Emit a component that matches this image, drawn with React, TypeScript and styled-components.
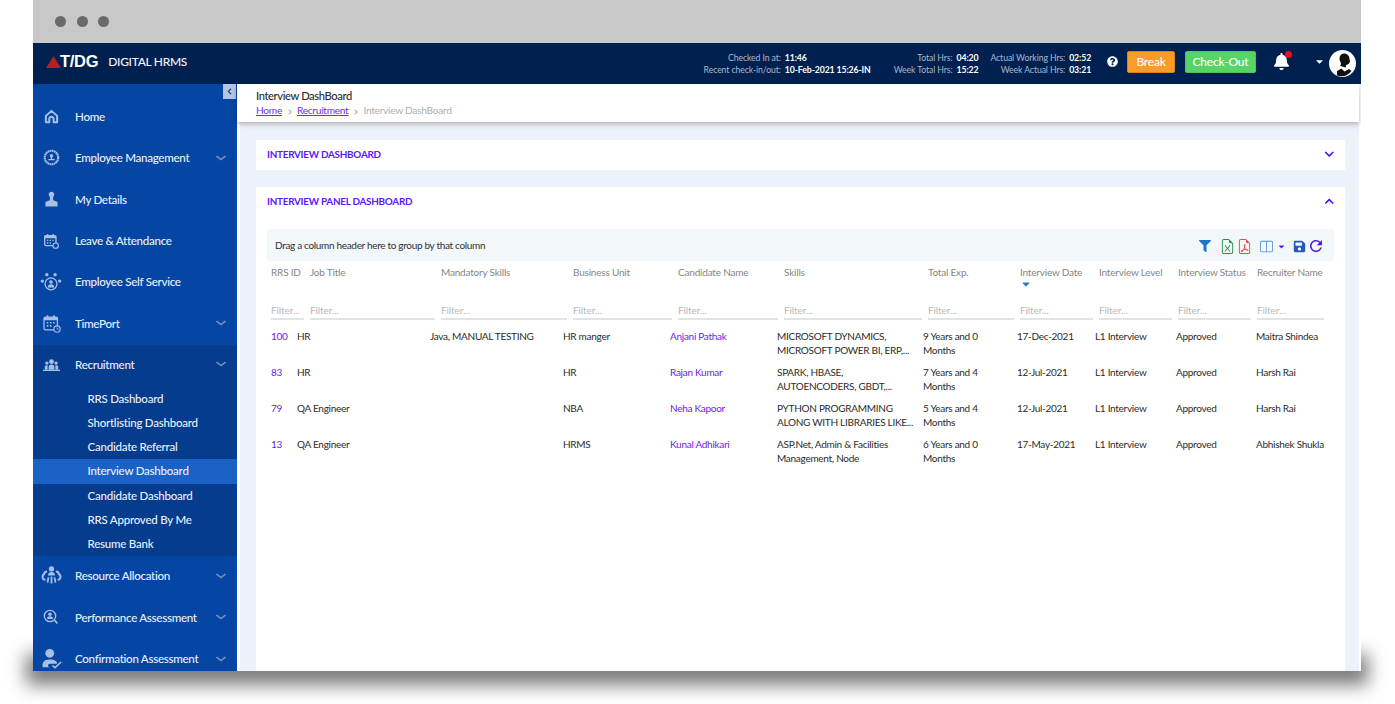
import React from "react";
import styled, { createGlobalStyle } from "styled-components";
import { FaBell, FaChevronDown, FaChevronUp, FaChevronLeft, FaChevronRight, FaFilter, FaQuestionCircle, FaSave, FaCaretDown } from "react-icons/fa";
import { BsFileEarmarkExcel, BsFileEarmarkPdf, BsLayoutSplit } from "react-icons/bs";
import { MdRefresh } from "react-icons/md";

const Global = createGlobalStyle`
  html, body { margin: 0; padding: 0; background: #fff; overflow: hidden; height: 704px; }
  * { box-sizing: border-box; }
  body { font-family: Lato, "Open Sans", sans-serif; }
`;

const Frame = styled.div`
  position: relative; isolation: isolate;
  margin-left: 33px; width: 1328px; height: 671px;
  &::before {
    content: ""; position: absolute; z-index: -1;
    left: -7px; right: -7px; top: 654px; height: 31px;
    background: rgba(0,0,0,.52); filter: blur(9px);
  }
`;
const Shell = styled.div`
  height: 671px; overflow: hidden; background: #fff;
  display: flex; flex-direction: column;
`;
const TitleBar = styled.div`
  height: 43px; flex: none; background: #c8c8c8;
  display: flex; align-items: center; gap: 10.5px; padding: 0 0 0 22px;
`;
const Dot = styled.span`width: 11px; height: 11px; border-radius: 50%; background: #6a6a6a;`;
const Header = styled.header`
  height: 41px; flex: none; background: #00214f; color: #fff;
  display: flex; align-items: center; padding: 0 5px 4px 13px;
`;
const Logo = styled.div`display: flex; align-items: center; gap: 0; width: 658px;`;
const LogoMark = styled.span`
  font: 900 16.5px/1 "Liberation Sans", sans-serif; letter-spacing: -.3px; color: #fff; margin-left: -1px;
`;
const Product = styled.span`font-size: 12px; font-weight: 500; margin-left: 10px; color: #f2f5fa; letter-spacing: -.3px;`;
const Stats = styled.div`
  display: grid; grid-template-columns: max-content max-content; column-gap: 4px;
  font-size: 8.7px; line-height: 12px; margin: 5px var(--gap) 0 0; letter-spacing: -.1px;
`;
const Label = styled.span`text-align: right; color: #aab7cb;`;
const Value = styled.span`color: #fff; font-weight: 700;`;
const Help = styled(FaQuestionCircle)`color: #fff; font-size: 11px; margin-left: 16px;`;
const HeadBtn = styled.button<{ $c: string; $w: number; $b: string; $l: number }>`
  height: 22px; width: ${p => p.$w}px; background: ${p => p.$c}; border: 1px solid ${p => p.$b}; border-radius: 2px;
  color: #fff; font: 500 12px Lato, sans-serif; letter-spacing: -.2px; padding: 0; margin-left: ${p => p.$l}px;
`;
const BellWrap = styled.div`position: relative; display: flex; margin-left: 17px; color: #fff; font-size: 17px;`;
const BellDot = styled.span`position: absolute; right: -2px; top: -2px; width: 7px; height: 7px; border-radius: 50%; background: #e8121f;`;
const Caret = styled(FaCaretDown)`color: #fff; font-size: 11px; margin-left: 24px;`;
const Avatar = styled.svg`width: 27px; height: 27px; margin: 4px 0 0 4px; flex: none;`;

const Body = styled.div`flex: 1; display: flex; min-height: 0;`;
const Sidebar = styled.nav`
  position: relative; width: 204px; flex: none; background: #0546a5; padding-top: 13px; overflow: hidden;
`;
const Collapse = styled.button`
  position: absolute; top: 0; right: 1px; width: 13px; height: 15px; background: #b4c6e3; border: 0; padding: 0;
  display: flex; align-items: center; justify-content: center; color: #1d3f78; font-size: 7px;
`;
const NavRow = styled.div<{ $open?: boolean }>`
  height: 41.3px; padding-bottom: 2px; display: flex; align-items: center; color: #e9eff9; font-size: 11.6px; font-weight: 500;
  letter-spacing: -.3px; background: ${p => (p.$open ? "#053c8e" : "transparent")};
`;
const NavIcon = styled.span`width: 36px; margin-right: 6px; flex: none; display: flex; justify-content: center; color: #a9c0e6;`;
const NavText = styled.span`flex: 1;`;
const NavChevron = styled(FaChevronDown)`color: #6f8cbc; font-size: 12px; margin-right: 10px; transform: scaleY(.75);`;
const SubList = styled.div`background: #053c8e; display: flex; flex-direction: column; padding-top: .5px;`;
const SubItem = styled.div<{ $active?: boolean }>`
  height: 24.25px; line-height: 24.25px; padding-left: 54.5px; font-size: 11.5px; color: #e9eff9; font-weight: 500;
  letter-spacing: -.23px; background: ${p => (p.$active ? "#1a62c6" : "transparent")};
`;

const Main = styled.main`flex: 1; margin: 0 2px 0 3px; background: #edf1f9; min-width: 0; display: flex; flex-direction: column;`;
const CrumbBar = styled.div`
  height: 38px; flex: none; background: #fff; padding: 5px 0 0 19px; margin-left: -3px;
  box-shadow: 0 2px 5px rgba(0,0,0,.28); position: relative;
`;
const PageTitle = styled.div`font-size: 11.2px; font-weight: 500; color: #2c2c2c; line-height: 14px; letter-spacing: -.4px;`;
const Crumbs = styled.div`display: flex; align-items: center; font-size: 10.2px; line-height: 14px; color: #b0b0b0; letter-spacing: -.3px;`;
const Crumb = styled.a`color: #6d2bff; text-decoration: underline;`;
const Sep = styled(FaChevronRight)`margin: 3px 4px 0 5px; color: #a6a6a6; font-size: 6px;`;
const Cards = styled.div`flex: 1; padding: 18px 14px 0 16px; display: flex; flex-direction: column; gap: 17px; min-height: 0;`;
const Card = styled.section<{ $grow?: boolean }>`
  background: #fff; ${p => (p.$grow ? "flex: 1;" : "height: 30px;")} padding: 0 11px;
`;
const CardHead = styled.div`
  height: 30px; padding-bottom: 2px; display: flex; align-items: center; justify-content: space-between;
  color: #5a17ff; font-size: 9.9px; font-weight: 700; letter-spacing: -.25px;
`;
const Chevron = styled.span`color: #4a12ee; font-size: 10.5px; display: flex; margin-right: 0;`;
const Toolbar = styled.div`
  margin-top: 12px; height: 32px; background: #f2f7fa; border-radius: 4px; display: flex; align-items: center;
  justify-content: space-between; padding: 0 9px 0 8px; font-size: 10px; color: #2f2f2f; letter-spacing: -.32px;
`;
const Tools = styled.div`display: flex; align-items: center; position: relative; top: 1px;`;
const ToolIcon = styled.span<{ $c: string; $s: number; $l: number }>`
  display: flex; color: ${p => p.$c}; font-size: ${p => p.$s}px; margin-left: ${p => p.$l}px;
`;
const HeadGrid = styled.div`
  display: grid; grid-template-columns: 39px 131px 132px 105px 106px 144px 92px 79px 79px 79px 73px;
  margin-left: 4px;
`;
const HeadCell = styled.div`
  height: 41px; padding-top: 5px; color: #868686; font-size: 10px; line-height: 13px; letter-spacing: -.2px; position: relative; white-space: nowrap;
`;
const SortMark = styled(FaCaretDown)`position: absolute; left: 0; top: 17px; color: #2f79c9; font-size: 12px;`;
const FilterCell = styled.div`
  height: 18px; margin-right: 6.5px; border-bottom: 2px solid #e2e3e4; color: #b9b9b9; font-size: 10px; line-height: 16px; letter-spacing: -.1px;
`;
const Rows = styled.div`margin-top: 9px; margin-left: 4px;`;
const Row = styled.div`
  display: grid; grid-template-columns: 26px 133px 133px 107px 107px 146px 94px 78px 81px 80px 74px;
  height: 36px; font-size: 10px; line-height: 14px; color: #2b2b2b; white-space: pre-line; letter-spacing: -.28px;
`;
const Link = styled.span`color: #6a22f2;`;

const Svg = ({ w, h = w, children }: { w: number; h?: number; children: React.ReactNode }) => (
  <svg width={w} height={h} viewBox="0 0 24 24" fill="currentColor">{children}</svg>
);
const Stroke = { fill: "none", stroke: "currentColor", strokeWidth: 2 };

const icons: Record<string, React.ReactNode> = {
  home: <Svg w={15}><path {...Stroke} strokeWidth={3.2} strokeLinejoin="round" d="M3 11 12 3l9 8v10h-5.500v-5a3.500 3.500 0 0 0-7 0v5H3z" /></Svg>,
  emp: <Svg w={17}><circle cx="12" cy="12" r="9.500" {...Stroke} strokeWidth={3} strokeDasharray="2.400 .6" /><circle cx="12" cy="9.500" r="2.400" /><path d="M11 11h2v3h3.500v2h-9v-2H11z" /></Svg>,
  details: <Svg w={17}><path d="M12 1a3.800 3.800 0 0 1 3 6.300c-1 1.500-1 3.500-.5 5.700l6 2.500V22H3.500v-6.500l6-2.500c.5-2.200.5-4.200-.5-5.700A3.800 3.800 0 0 1 12 1z" /></Svg>,
  leave: <Svg w={16}><rect x="2.500" y="4" width="17" height="15" rx="2" {...Stroke} /><path d="M2.500 4h17v4h-17zM6 1.500h2V6H6zM14 1.500h2V6h-2zM6 10h2v2H6zM10 10h2v2h-2zM14 10h2v2h-2zM6 14h2v2H6zM10 14h2v2h-2z" /><circle cx="19" cy="19" r="4" fill="#0546a5" stroke="currentColor" strokeWidth="1.600" /></Svg>,
  self: <Svg w={22}><circle cx="7.500" cy="4" r="1.800" /><circle cx="16.500" cy="4" r="1.800" /><circle cx="2.500" cy="11" r="1.800" /><circle cx="21.500" cy="11" r="1.800" /><circle cx="12" cy="14" r="6.500" {...Stroke} strokeWidth={1.400} /><circle cx="12" cy="12" r="2" /><path d="M8.500 18c0-2.500 1.500-3.500 3.500-3.500s3.500 1 3.500 3.500z" /></Svg>,
  time: <Svg w={19}><rect x="2.500" y="4" width="17" height="16" rx="2" {...Stroke} strokeWidth={1.600} /><path d="M2.500 4h17v4h-17zM6 1.500h2V6H6zM14 1.500h2V6h-2zM6 10h2v2H6zM10 10h2v2h-2zM14 10h2v2h-2zM6 14h2v2H6zM10 14h2v2h-2z" /><circle cx="19" cy="19" r="4" fill="#0546a5" stroke="currentColor" strokeWidth="1.400" /><path d="M19 17v2h2" {...Stroke} strokeWidth={1} /></Svg>,
  rec: <Svg w={17}><circle cx="12" cy="8" r="3.400" /><circle cx="5.500" cy="10" r="2.400" /><circle cx="18.500" cy="10" r="2.400" /><path d="M8 19v-4c0-2 2-3 4-3s4 1 4 3v4zM2.500 19v-3c0-2 1-3 3-3l1 .2V19zM21.500 19v-3c0-2-1-3-3-3l-1 .2V19zM0 19.500h24V21H0z" /></Svg>,
  res: <Svg w={21}><circle cx="12" cy="4.500" r="3" /><path d="M8 12c0-3 2-4 4-4s4 1 4 4zM11 13h2v8h-2zM7.500 14l2 .3-1 6-2-.3zM16.500 14l-2 .3 1 6 2-.3z" /><path {...Stroke} strokeWidth={2.200} d="M7 7.500a3.500 3.500 0 0 0-3.500 3A3.500 3.500 0 0 0 5 17M17 7.500a3.500 3.500 0 0 1 3.500 3A3.500 3.500 0 0 1 19 17" /></Svg>,
  perf: <Svg w={16}><circle cx="10.500" cy="10.500" r="8.500" {...Stroke} /><circle cx="10.500" cy="8" r="2.600" /><path d="M6 15c0-3 2-4 4.500-4s4.500 1 4.500 4zM16.500 17.500l2-1.500 4 5-2 1.500z" /></Svg>,
  conf: <Svg w={21}><circle cx="10" cy="6" r="5" /><path d="M2 22c-1-5 1-9 8-9s9 3 8 5h-7c-2 0-3 1-3 2s1 2 2 2z" /><path {...Stroke} strokeWidth={1.800} d="m13 20 3 2.500 7-6.500" /></Svg>,
};

const topNav = [
  ["home", "Home", false], ["emp", "Employee Management", true], ["details", "My Details", false],
  ["leave", "Leave & Attendance", false], ["self", "Employee Self Service", false], ["time", "TimePort", true],
] as const;
const bottomNav = [
  ["res", "Resource Allocation"], ["perf", "Performance Assessment"], ["conf", "Confirmation Assessment"],
] as const;
const subs = ["RRS Dashboard", "Shortlisting Dashboard", "Candidate Referral", "Interview Dashboard", "Candidate Dashboard", "RRS Approved By Me", "Resume Bank"];
const columns = ["RRS ID", "Job Title", "Mandatory Skills", "Business Unit", "Candidate Name", "Skills", "Total Exp.", "Interview Date", "Interview Level", "Interview Status", "Recruiter Name"];
const rows = [
  ["100", "HR", "Java, MANUAL TESTING", "HR manger", "Anjani Pathak", "MICROSOFT DYNAMICS,\nMICROSOFT POWER BI, ERP,...", "9 Years and 0\nMonths", "17-Dec-2021", "L1 Interview", "Approved", "Maitra Shindea"],
  ["83", "HR", "", "HR", "Rajan Kumar", "SPARK, HBASE,\nAUTOENCODERS, GBDT,...", "7 Years and 4\nMonths", "12-Jul-2021", "L1 Interview", "Approved", "Harsh Rai"],
  ["79", "QA Engineer", "", "NBA", "Neha Kapoor", "PYTHON PROGRAMMING\nALONG WITH LIBRARIES LIKE...", "5 Years and 4\nMonths", "12-Jul-2021", "L1 Interview", "Approved", "Harsh Rai"],
  ["13", "QA Engineer", "", "HRMS", "Kunal Adhikari", "ASP.Net, Admin & Facilities\nManagement, Node", "6 Years and 0\nMonths", "17-May-2021", "L1 Interview", "Approved", "Abhishek Shukla"],
];

const StatBlock = ({ gap, items }: { gap: number; items: [string, string][] }) => (
  <Stats style={{ "--gap": `${gap}px` } as React.CSSProperties}>
    {items.map(([l, v]) => (
      <React.Fragment key={l}><Label>{l}</Label><Value>{v}</Value></React.Fragment>
    ))}
  </Stats>
);

export default function App() {
  return (
    <>
      <Global />
      <Frame>
        <Shell>
          <TitleBar><Dot /><Dot /><Dot /></TitleBar>
          <Header>
            <Logo>
              <svg width="15" height="12" viewBox="0 0 15 12"><path d="M7.500 0 15 12H0z" fill="#b3201f" /></svg>
              <LogoMark>T/DG</LogoMark>
              <Product>DIGITAL HRMS</Product>
            </Logo>
            <StatBlock gap={23} items={[["Checked In at:", "11:46"], ["Recent check-in/out:", "10-Feb-2021 15:26-IN"]]} />
            <StatBlock gap={12} items={[["Total Hrs:", "04:20"], ["Week Total Hrs:", "15:22"]]} />
            <StatBlock gap={0} items={[["Actual Working Hrs:", "02:52"], ["Week Actual Hrs:", "03:21"]]} />
            <Help />
            <HeadBtn $c="#f99c27" $b="#d9851c" $w={48} $l={9}>Break</HeadBtn>
            <HeadBtn $c="#56d466" $b="#4cc45b" $w={71} $l={10}>Check-Out</HeadBtn>
            <BellWrap><FaBell /><BellDot /></BellWrap>
            <Caret />
            <Avatar viewBox="0 0 27 27">
              <circle cx="13.500" cy="13.500" r="13.500" fill="#fff" />
              <path d="M15 3.500c3.500 0 5.500 2.500 5.500 5.500 0 1 .7 2 .4 3-.5 1.500-2 2.500-3.700 3l-.5 2.500-5.500-1.500c1-1.500 1-3-.2-5-1-2-.5-7.500 4-7.500z" fill="#111" />
              <path d="M8 21l4.500-2.500 3 3 4.500-2.500 2.500 2A13.500 13.500 0 0 1 8 25.500z" fill="#111" />
            </Avatar>
          </Header>
          <Body>
            <Sidebar>
              <Collapse aria-label="Collapse"><FaChevronLeft /></Collapse>
              {topNav.map(([k, t, c]) => (
                <NavRow key={t}><NavIcon>{icons[k]}</NavIcon><NavText>{t}</NavText>{c && <NavChevron />}</NavRow>
              ))}
              <NavRow $open><NavIcon>{icons.rec}</NavIcon><NavText>Recruitment</NavText><NavChevron /></NavRow>
              <SubList>
                {subs.map(s => <SubItem key={s} $active={s === "Interview Dashboard"}>{s}</SubItem>)}
              </SubList>
              {bottomNav.map(([k, t]) => (
                <NavRow key={t}><NavIcon>{icons[k]}</NavIcon><NavText>{t}</NavText><NavChevron /></NavRow>
              ))}
            </Sidebar>
            <Main>
              <CrumbBar>
                <PageTitle>Interview DashBoard</PageTitle>
                <Crumbs>
                  <Crumb>Home</Crumb><Sep /><Crumb>Recruitment</Crumb><Sep /><span>Interview DashBoard</span>
                </Crumbs>
              </CrumbBar>
              <Cards>
                <Card>
                  <CardHead>INTERVIEW DASHBOARD<Chevron><FaChevronDown /></Chevron></CardHead>
                </Card>
                <Card $grow>
                  <CardHead>INTERVIEW PANEL DASHBOARD<Chevron><FaChevronUp /></Chevron></CardHead>
                  <Toolbar>
                    Drag a column header here to group by that column
                    <Tools>
                      <ToolIcon $c="#1f74c4" $s={12} $l={0}><FaFilter /></ToolIcon>
                      <ToolIcon $c="#26924a" $s={15} $l={9}><BsFileEarmarkExcel /></ToolIcon>
                      <ToolIcon $c="#f0484e" $s={15} $l={2}><BsFileEarmarkPdf /></ToolIcon>
                      <ToolIcon $c="#4f8fd6" $s={13} $l={8}><BsLayoutSplit /></ToolIcon>
                      <ToolIcon $c="#5a17ff" $s={9} $l={4}><FaCaretDown /></ToolIcon>
                      <ToolIcon $c="#2459b8" $s={13} $l={7}><FaSave /></ToolIcon>
                      <ToolIcon $c="#4a17f0" $s={18} $l={1}><MdRefresh /></ToolIcon>
                    </Tools>
                  </Toolbar>
                  <HeadGrid>
                    {columns.map(c => (
                      <HeadCell key={c}>{c}{c === "Interview Date" && <SortMark />}</HeadCell>
                    ))}
                    {columns.map(c => <FilterCell key={c}>Filter...</FilterCell>)}
                  </HeadGrid>
                  <Rows>
                    {rows.map(r => (
                      <Row key={r[0]}>
                        {r.map((v, i) => (
                          <div key={i}>{i === 0 || i === 4 ? <Link>{v}</Link> : v}</div>
                        ))}
                      </Row>
                    ))}
                  </Rows>
                </Card>
              </Cards>
            </Main>
          </Body>
        </Shell>
      </Frame>
    </>
  );
}
